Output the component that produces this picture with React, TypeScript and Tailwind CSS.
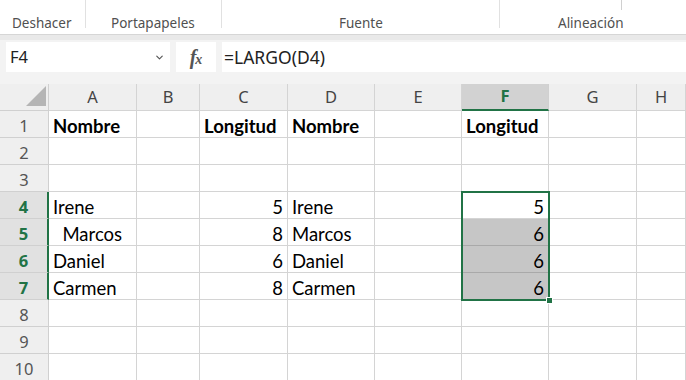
import { ChevronDown } from 'lucide-react';

const cols = ['A', 'B', 'C', 'D', 'E', 'F', 'G', 'H'];

type Cell = { v: string; bold?: boolean; right?: boolean };

const data: Record<number, Record<string, Cell>> = {
  1: {
    A: { v: 'Nombre', bold: true },
    C: { v: 'Longitud', bold: true },
    D: { v: 'Nombre', bold: true },
    F: { v: 'Longitud', bold: true },
  },
  4: { A: { v: 'Irene' }, C: { v: '5', right: true }, D: { v: 'Irene' }, F: { v: '5', right: true } },
  5: { A: { v: '\u00a0\u00a0Marcos' }, C: { v: '8', right: true }, D: { v: 'Marcos' }, F: { v: '6', right: true } },
  6: { A: { v: 'Daniel' }, C: { v: '6', right: true }, D: { v: 'Daniel' }, F: { v: '6', right: true } },
  7: { A: { v: 'Carmen' }, C: { v: '8', right: true }, D: { v: 'Carmen' }, F: { v: '6', right: true } },
};

const selectedRows = [4, 5, 6, 7];

function Ribbon() {
  return (
    <div className="h-[35px] bg-white border-b border-[#d6d6d6] flex text-[13.5px] text-[#505050] font-['Noto_Sans',sans-serif]">
      <div className="w-[86px] pl-[12px] pt-[13px] border-r border-[#e1e1e1] h-[28px]">Deshacer</div>
      <div className="w-[136px] pl-[25px] pt-[13px] border-r border-[#e1e1e1] h-[28px]">Portapapeles</div>
      <div className="w-[278px] pl-[117px] pt-[13px] border-r border-[#e1e1e1] h-[28px]">Fuente</div>
      <div className="w-[122px] pl-[58px] pt-[13px] relative">
        Alineación
        <div className="absolute right-0 top-0 h-[10px] border-r border-[#d0d0d0]" />
      </div>
    </div>
  );
}

function FormulaBar() {
  return (
    <div className="bg-[#f3f3f3]">
      <div className="h-[5px] bg-[#e9e9e9]" />
      <div className="h-[44px] flex items-start pt-[2px] font-['Noto_Sans',sans-serif]">
        <div className="ml-[6px] w-[164px] h-[30px] bg-white flex items-center justify-between pl-[4px] pr-[5px] text-[16.5px] text-[#222]">
          <span>F4</span>
          <ChevronDown className="w-[11px] h-[11px] text-[#555]" strokeWidth={2.5} />
        </div>
        <div className="ml-[6px] w-[40px] h-[30px] bg-white flex items-center justify-center text-[#555] italic font-['Liberation_Serif',serif] font-bold">
          <span className="text-[20px] leading-none">f</span>
          <span className="text-[14px] leading-none -ml-[1px] mt-[5px]">x</span>
        </div>
        <div className="ml-[6px] flex-1 h-[30px] bg-white flex items-center pl-[2px] text-[17.5px] text-[#222]">
          =LARGO(D4)
        </div>
      </div>
    </div>
  );
}

function Sheet() {
  const rows = Array.from({ length: 10 }, (_, i) => i + 1);
  return (
    <div className="relative">
      <div className="grid grid-cols-[49px_88px_63px_88px_87px_87px_87px_88px_1fr] auto-rows-[27px]">
        <div className="bg-[#efefef] border-r border-b border-[#d0d0d0] relative">
          <svg className="absolute left-[26px] top-[2px]" width="20" height="20" viewBox="0 0 20 20">
            <polygon points="20,0 20,20 0,20" fill="#b5b5b5" />
          </svg>
        </div>
        {cols.map((c) =>
          c === 'F' ? (
            <div
              key={c}
              className="bg-[#d2d2d2] border-r border-[#d0d0d0] border-b-2 border-b-[#217346] flex items-center justify-center text-[16.5px] font-bold text-[#217346] font-['Noto_Sans',sans-serif]"
            >
              {c}
            </div>
          ) : (
            <div
              key={c}
              className="bg-[#efefef] border-r border-b border-[#d4d4d4] flex items-center justify-center text-[16.5px] text-[#444] font-['Noto_Sans',sans-serif]"
            >
              {c}
            </div>
          )
        )}
        {rows.map((r) => {
          const sel = selectedRows.includes(r);
          return [
            <div
              key={`h${r}`}
              className={
                sel
                  ? 'bg-[#e1e1e1] border-b border-[#d0d0d0] border-r-2 border-r-[#217346] flex items-center justify-center pt-[4px] text-[16.5px] font-bold text-[#217346] font-[\'Noto_Sans\',sans-serif]'
                  : 'bg-[#efefef] border-b border-r border-[#d0d0d0] flex items-center justify-center pt-[4px] text-[16.5px] text-[#555] font-[\'Noto_Sans\',sans-serif]'
              }
            >
              {r}
            </div>,
            ...cols.map((c) => {
              const cell = data[r]?.[c];
              const gray = c === 'F' && r >= 5 && r <= 7;
              return (
                <div
                  key={`${c}${r}`}
                  className={`border-r border-b ${gray ? 'bg-[#c6c6c6] border-b-[#a9a9a9] border-r-[#d4d4d4]' : 'bg-white border-[#d4d4d4]'} flex items-end px-[4px] text-[18.5px] leading-[21px] text-black font-['Lato',sans-serif] whitespace-pre overflow-visible ${cell?.right ? 'justify-end' : 'justify-start'} ${cell?.bold ? 'font-bold' : ''}`}
                >
                  {cell?.v}
                </div>
              );
            }),
          ];
        })}
      </div>
      <div className="absolute left-[461px] top-[107px] w-[89px] h-[110px] border-2 border-[#217346] pointer-events-none" />
      <div className="absolute left-[546px] top-[213px] w-[7px] h-[7px] bg-[#217346] border border-white" />
    </div>
  );
}

export default function App() {
  return (
    <div className="w-[686px] h-[380px] overflow-hidden bg-white">
      <Ribbon />
      <FormulaBar />
      <Sheet />
    </div>
  );
}
